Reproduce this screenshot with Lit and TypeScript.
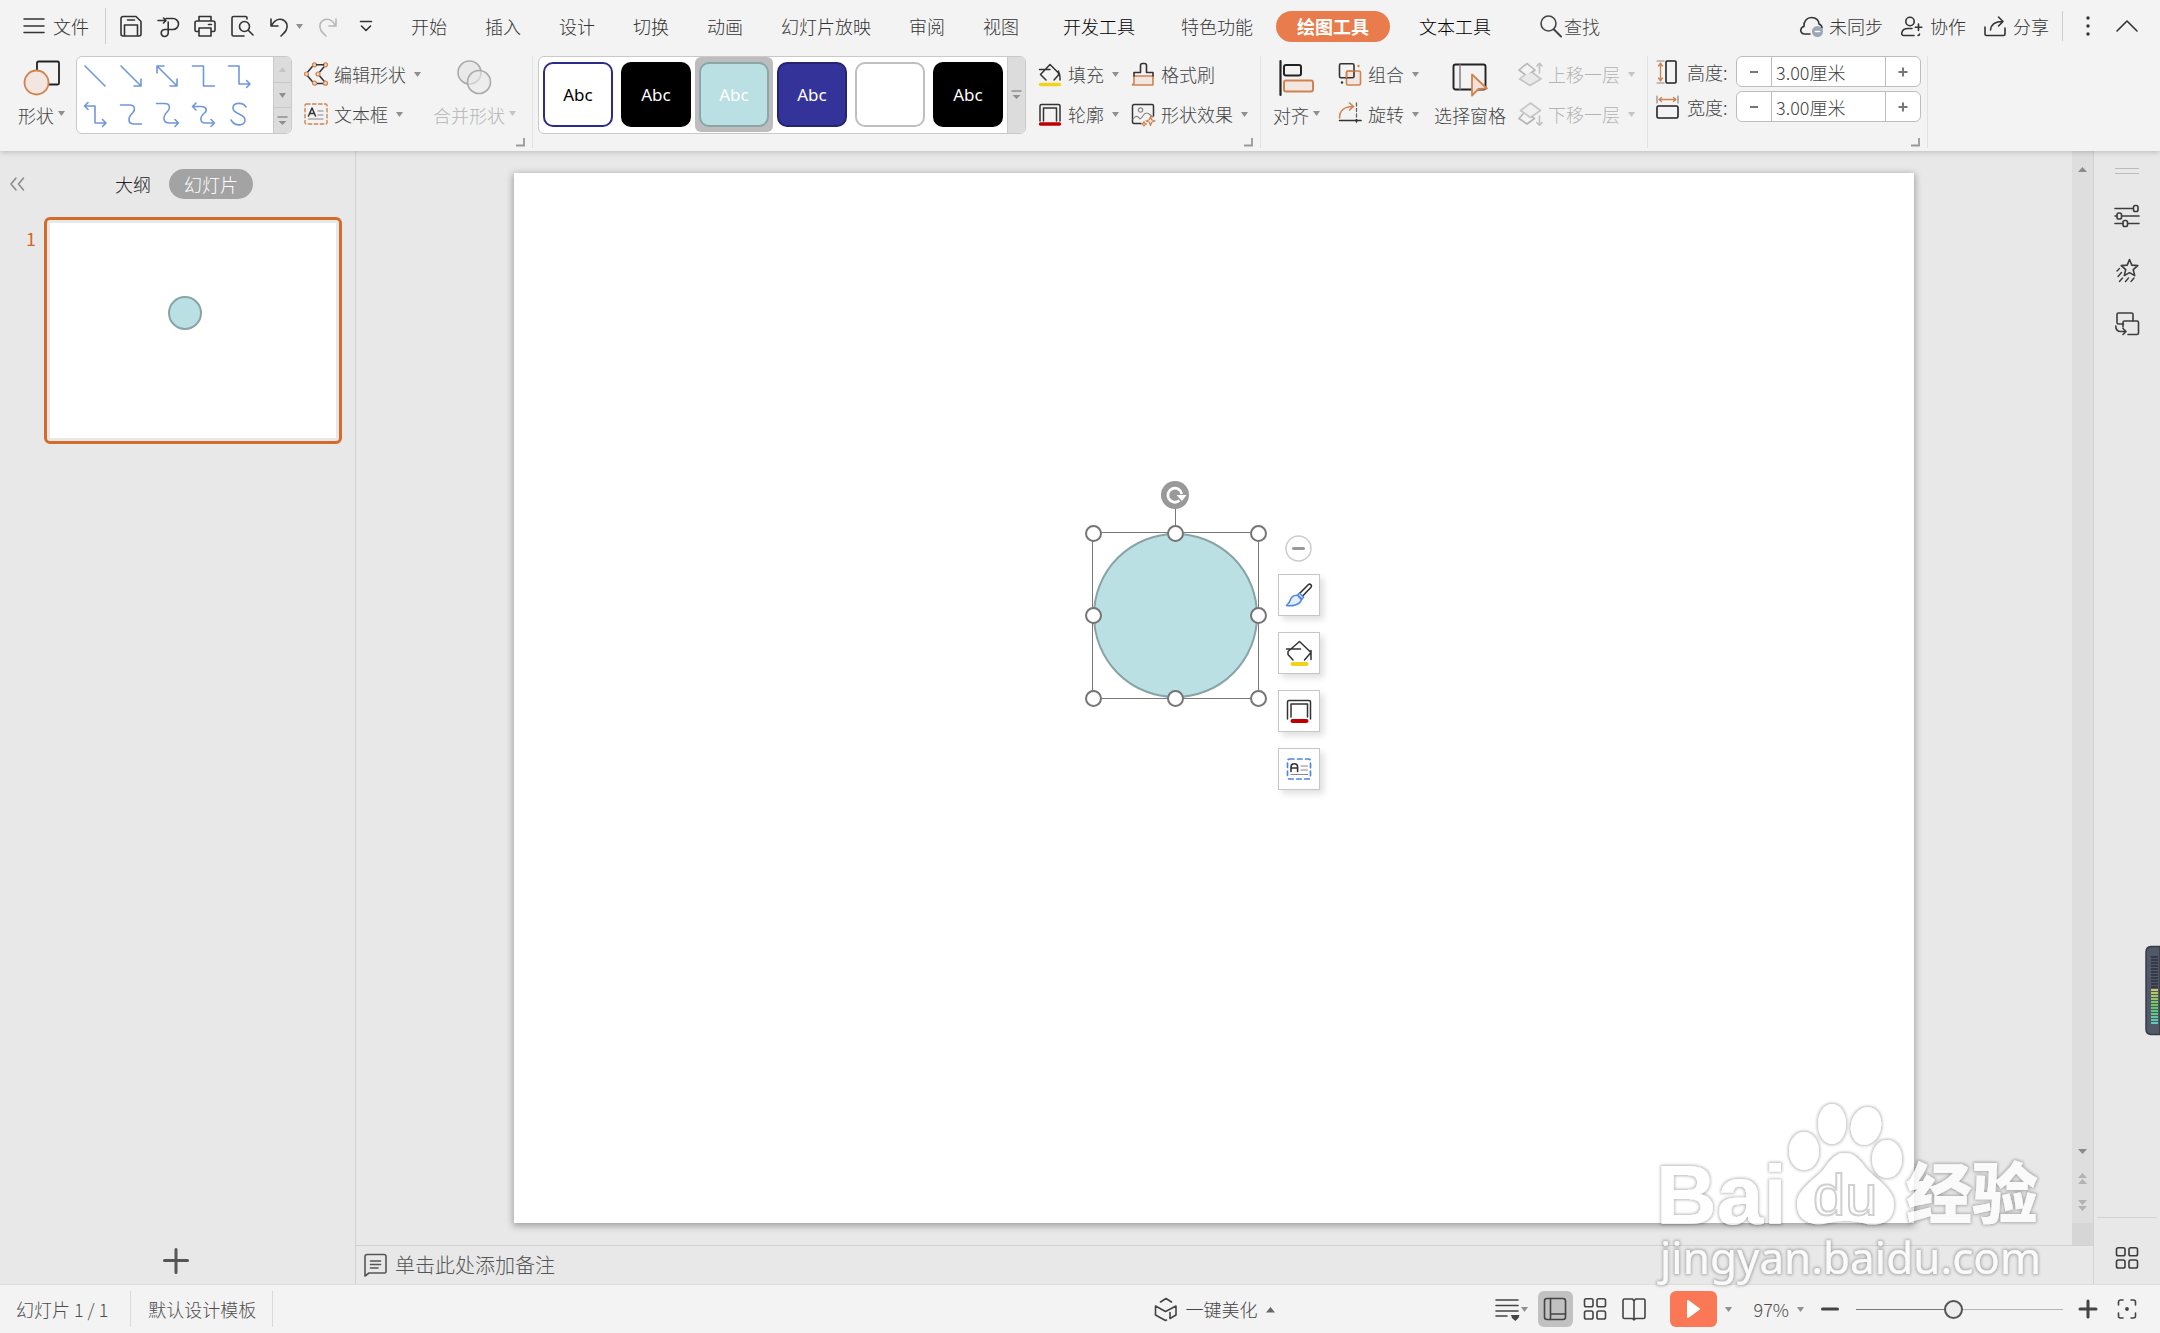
import { LitElement, html, svg, css, TemplateResult, SVGTemplateResult } from "lit";
import { customElement, state, property } from "lit/decorators.js";
import { classMap } from "lit/directives/class-map.js";
import { styleMap } from "lit/directives/style-map.js";

const icon = (body: SVGTemplateResult, w = 24, h = 24): TemplateResult => html`
  <svg class="ico" width=${w} height=${h} viewBox="0 0 ${w} ${h}" fill="none" stroke="currentColor"
    stroke-width="1.6" stroke-linecap="round" stroke-linejoin="round" aria-hidden="true">${body}</svg>`;

const caret = html`<svg class="caret" width="7" height="5" viewBox="0 0 7 5" aria-hidden="true"><path d="M0 0h7L3.5 5z" fill="currentColor"/></svg>`;

const O = "#cf8350";
const OF = "#f3e6e0";

const I = {
  menu: icon(svg`<path d="M1 5h20M1 12h20M1 18.500h20" stroke-width="1.500"/>`, 22, 24),
  save: icon(svg`<path d="M2 4.500a2 2 0 0 1 2-2h13l5 5V20a2 2 0 0 1-2 2H4a2 2 0 0 1-2-2zM5.500 22V11h13v11M8.500 6h7"/>`),
  exportDoc: icon(svg`<path d="M2 6.500h8M7.500 4l2.500 2.500L7.500 9M10 4.500h7a5.500 5.500 0 0 1 0 11H9a3.500 3.500 0 1 0 3.200 3.500V8"/>`),
  print: icon(svg`<path d="M6 7V2.500h12V7M5 17.500H3.500A1.500 1.500 0 0 1 2 16V9a2 2 0 0 1 2-2h16a2 2 0 0 1 2 2v7a1.500 1.500 0 0 1-1.500 1.500H19M6 14h12v8H6zM15.500 10.500h3"/>`),
  preview: icon(svg`<path d="M17 5V4a1.500 1.500 0 0 0-1.500-1.500h-12A1.500 1.500 0 0 0 2 4v16.500A1.500 1.500 0 0 0 3.500 22H14"/><circle cx="14.500" cy="12.500" r="5"/><path d="M18.500 16.500l4.500 4.500"/>`),
  undo: icon(svg`<path d="M4 5v7h7M4.500 11.500C7 7 11 4.500 15 5.500c5 1.500 6.500 7 4 11-1.200 2-3 3.500-5 5.500"/>`),
  redo: icon(svg`<path d="M20 5v7h-7M19.500 11.500C17 7 13 4.500 9 5.500c-5 1.500-6.500 7-4 11 1.200 2 3 3.500 5 5.500"/>`),
  more: icon(svg`<path d="M7.500 7.500h11M8.500 12l4.500 4.500 4.500-4.500"/>`),
  search: icon(svg`<circle cx="9.500" cy="9.500" r="7.500"/><path d="M15 15.500l7 7" stroke-width="2"/>`),
  cloud: icon(svg`<path d="M11 20H5.500C2 20 .8 16.500 2.500 14c.7-1 1.800-1.400 2.500-1.500C4.500 7 8 3.500 12.500 3.500c4.500 0 7.500 3 7.500 6.500 2 .8 3 2 3 4"/><circle cx="18.500" cy="17.500" r="5.500" fill="#9ba6b8" stroke="none"/><path d="M16.500 17.500h4" stroke="#fff"/>`),
  person: icon(svg`<circle cx="10" cy="7.500" r="4.200"/><path d="M14 21.500H3.500c-2 0-2-2-1.500-3.500.6-2 3-3.500 6-3.500h4M18 21.500c1 0 1.500-.5 1.500-1.500M18.500 10v6.500M15.300 13.200h6.500"/>`),
  share: icon(svg`<path d="M2 13v7a1.500 1.500 0 0 0 1.500 1.500h17A1.500 1.500 0 0 0 22 20v-6M7.500 16c.5-5 4-8.500 12-8.500M15.500 3l4.500 4.500-4.500 4.500"/>`),
  dots: icon(svg`<g fill="currentColor" stroke="none"><circle cx="6" cy="4" r="1.700"/><circle cx="6" cy="12" r="1.700"/><circle cx="6" cy="20" r="1.700"/></g>`, 12, 24),
  chevUp: icon(svg`<path d="M2 17L12 7l10 10"/>`),

  shapes: icon(svg`<rect x="13" y="1.500" width="22" height="23" rx="1.500" stroke="#222" stroke-width="1.800"/><circle cx="12.500" cy="22.500" r="12" fill="${OF}" stroke="${O}" stroke-width="1.800"/>`, 36, 36),
  editShape: icon(svg`<path d="M10 2.500L2 12l8 9.500h12L14 12l8-9.500" stroke="#333" stroke-width="1.500"/><g fill="#f3d5c4" stroke="${O}" stroke-width="1.200"><circle cx="10.500" cy="2.800" r="2"/><circle cx="21.500" cy="2.800" r="2"/><circle cx="2.500" cy="12" r="2"/><circle cx="14" cy="12" r="2"/><circle cx="10.500" cy="21.200" r="2"/><circle cx="21.500" cy="21.200" r="2"/></g><path d="M12.500 2.800h7" stroke="#333" stroke-width="1.500"/>`),
  textBox: icon(svg`<rect x="1" y="2" width="22" height="20" rx="1.500" stroke="${O}" stroke-width="1.400" stroke-dasharray="3.500 2.500"/><path d="M4.500 14L8 6l3.500 8M5.800 11.500h4.400" stroke="#333" stroke-width="1.500"/><path d="M14 9h5M14 13h5M4.500 17h14.500" stroke="#888" stroke-width="1.200"/>`),
  merge: icon(svg`<g stroke="#aaa" fill="#e9e9e9"><circle cx="12.500" cy="12.500" r="11.500"/><circle cx="22" cy="22" r="11.500" fill-opacity=".6"/></g>`, 35, 35),
  fill: icon(svg`<path d="M8 18L2.500 12.500 12 2.500l8.500 8.500M16 18l4.500-5V9M1.500 7.500h10.500M20.500 10c1.500 1 1.500 3 1.500 8" stroke="#333" stroke-width="1.500"/><path d="M2.500 22.500h19" stroke="#f2d31b" stroke-width="3.400"/>`),
  outline: icon(svg`<path d="M2 19V4a1.500 1.500 0 0 1 1.500-1.500h17A1.500 1.500 0 0 1 22 4v15M5.500 19V6h13v13" stroke="#333" stroke-width="1.500"/><path d="M2.500 22h19" stroke="#c00000" stroke-width="3.400"/>`),
  brush: icon(svg`<path d="M3 14h19v9H1.500L3 21z" fill="${OF}" stroke="${O}"/><path d="M3 14v-3.500h6.500V3.500a2 2 0 0 1 2-2h2a2 2 0 0 1 2 2v7H22V14" stroke="#333"/>`),
  effects: icon(svg`<path d="M10 21.500H3A1.500 1.500 0 0 1 1.500 20V4A1.500 1.500 0 0 1 3 2.500h18A1.500 1.500 0 0 1 22.500 4v10" stroke="#333" stroke-width="1.500"/><g stroke="#888" stroke-width="1.200"><circle cx="9.500" cy="8" r="2.200"/><path d="M2 17c3-4 5-3 7 0 3-1 3-6 6.500-6 3 0 4 2 6 4"/></g><path d="M19.500 14.500l1.200 3.300 3.300 1.200-3.300 1.200-1.200 3.300-1.200-3.300L15 19l3.300-1.200zM13 19.500l.8 1.700 1.700.8-1.700.8L13 24l-.8-1.200-1.700-.8 1.700-.8z" stroke="${O}" stroke-width="1.200" fill="${OF}"/>`),
  align: icon(svg`<path d="M1.500 1v34" stroke="#222" stroke-width="2.200"/><rect x="5" y="5" width="17" height="10.500" rx="2" stroke="#222" stroke-width="2"/><rect x="5" y="20.500" width="29" height="11" rx="2" stroke="${O}" stroke-width="2" fill="${OF}"/>`, 36, 36),
  group: icon(svg`<rect x="8.500" y="9" width="14" height="14" rx="1.500" fill="${OF}" stroke="${O}"/><rect x="1.500" y="1.800" width="14.500" height="14" rx="1.500" stroke="#333"/><path d="M8.500 15.500V10.500a1.500 1.500 0 0 1 1.500-1.500h6" stroke="${O}"/><circle cx="20.500" cy="4" r="1.200" fill="${O}" stroke="none"/><circle cx="4" cy="20.500" r="1.200" fill="#333" stroke="none"/>`),
  rotate: icon(svg`<path d="M1.500 16C1.500 8.500 7 4.500 15 4.500M11.500 1l4 3.500-4 3.500" stroke="${O}"/><path d="M18.500 1v22" stroke="#666" stroke-width="1.300" stroke-dasharray="3 2.500"/><path d="M1.500 18.500h21.500" stroke="#333"/><circle cx="18.500" cy="18.500" r="1.300" fill="#333" stroke="none"/>`),
  pane: icon(svg`<rect x="1.500" y="4.500" width="32" height="25" rx="2" stroke="#222" stroke-width="1.900"/><path d="M8 5v24" stroke="#888"/><path d="M20 14.500l15 14-8.500.5L20 35.500z" fill="#f3e2d8" stroke="${O}" stroke-width="1.800"/>`, 36, 36),
  up: icon(svg`<path d="M9 1.500L17 8l-8 6-8-6z"/><path d="M14.500 10.500l8.500 6.500-11 6.500L1.500 17l5-4" stroke-opacity=".7" fill="#e9e9e9"/><path d="M21.500 11V1.500M18.800 4l2.700-2.700L24 4" stroke-opacity=".8"/>`),
  down: icon(svg`<path d="M12.500 1l10 7.500-10 7-10-7z" stroke-opacity=".7" fill="#efefef"/><path d="M5 12l-4 4.500L9 22l7.500-5.500-2-1.500" /><path d="M21.500 14v9M18.800 20.500l2.700 2.700 2.500-2.700" stroke-opacity=".8"/>`),
  height: icon(svg`<path d="M1 1h7M1 23h7" stroke="#888" stroke-width="1.200"/><path d="M4.500 3v18M2.500 6l2-2.800 2 2.800M2.500 18l2 2.800 2-2.800" stroke="${O}" stroke-width="1.300"/><rect x="10" y="1" width="10" height="22" rx="1" stroke="#222"/>`),
  width: icon(svg`<path d="M1 1v7M22 1v7" stroke="#888" stroke-width="1.200"/><path d="M3 4.500h17M5.500 2.500L3 4.500l2.500 2M17.500 2.500l2.500 2-2.500 2" stroke="${O}" stroke-width="1.300"/><rect x="1" y="11" width="21" height="12" rx="1.500" stroke="#222"/>`),
  launcher: icon(svg`<path d="M8 0v7.500H0" stroke="#999" stroke-width="1.800" stroke-linecap="butt" stroke-linejoin="miter"/>`, 9, 9),

  collapse: icon(svg`<path d="M6 1L1 7l5 6M13.500 1l-5 6 5 6" stroke="#888" stroke-width="1.500"/>`, 15, 14),
  plus: icon(svg`<path d="M1.500 12.500h23M13 1.500v23" stroke-width="3"/>`, 26, 26),
  note: icon(svg`<path d="M2 23V3.500a2 2 0 0 1 2-2h17a2 2 0 0 1 2 2v15a1.500 1.500 0 0 1-1.500 1.500H6z"/><path d="M7.500 8h10M7.500 11.500h10M7.500 15h7.500"/>`),
  magic: icon(svg`<path d="M1.500 9v9l10 5.500 1-.5M1.500 9l10 5.500L22 9v9l-6 3.500v-6M6.500 5L12 1.500 17.500 5"/>`),
  lines: icon(svg`<path d="M1 3h22M1 8.500h22M1 14h22M1 19h11"/><path d="M16 18h8.500l-1 3-3.200 3-3.300-3z" fill="currentColor" stroke="none"/>`),
  normal: icon(svg`<rect x="1.500" y="1.500" width="21" height="21" rx="2.500"/><path d="M7.500 1.500v21M7.500 17h15"/>`),
  grid: icon(svg`<rect x="1.500" y="1.800" width="8.500" height="8" rx="1.800"/><rect x="14" y="1.800" width="8.500" height="8" rx="1.800"/><rect x="1.500" y="14" width="8.500" height="8" rx="1.800"/><rect x="14" y="14" width="8.500" height="8" rx="1.800"/>`),
  book: icon(svg`<path d="M12 4l-1.500-2H2.500a1.500 1.500 0 0 0-1.500 1.500V20a1.500 1.500 0 0 0 1.500 1.500h8L12 23l1.500-1.500h8A1.500 1.500 0 0 0 23 20V3.500A1.500 1.500 0 0 0 21.500 2h-8zM12 4v19"/>`),
  play: icon(svg`<path d="M5 5v16L16 13z" fill="#fff" stroke="#fff" stroke-width="2"/>`, 20, 26),
  minus: icon(svg`<path d="M4.500 12h15" stroke-width="3"/>`),
  plusSm: icon(svg`<path d="M4 12h16M12 4v16" stroke-width="3"/>`),
  fit: icon(svg`<path d="M3.500 8V5a2 2 0 0 1 2-2h2.500M16 3h2.500a2 2 0 0 1 2 2v3M20.500 16v3a2 2 0 0 1-2 2H16M8 21H5.500a2 2 0 0 1-2-2v-3"/><circle cx="12" cy="12" r="1.900" fill="currentColor" stroke="none"/>`),

  sliders: icon(svg`<path d="M0 4.500h18M0 12h2M7 12h17M0 19.500h8M13 19.500h11"/><rect x="18.500" y="1.500" width="4.500" height="6" rx="1.800"/><rect x="2" y="9" width="4.500" height="6" rx="1.800"/><rect x="8" y="16.500" width="4.500" height="6" rx="1.800"/>`),
  star: icon(svg`<path d="M14.500 1.500l2.300 5.600 6 .5-4.600 4 1.500 6-5.200-3-5.200 3 1.400-6-4.500-4 6-.5z"/><path d="M4.500 10.500L2 13M6.500 14.500l-3.500 4M7.500 20l-3 3.500M13.500 20l-3 3.500M19 20l-3 3.500" stroke-width="1.400"/>`),
  swap: icon(svg`<path d="M8.500 12H3.500A1.500 1.500 0 0 1 2 10.500v-8A1.500 1.500 0 0 1 3.500 1h13A1.500 1.500 0 0 1 18 2.500V9"/><path d="M13 22.500h9a1.500 1.500 0 0 0 1.500-1.500v-10.500A1.500 1.500 0 0 0 22 9H9.500A1.500 1.500 0 0 0 8 10.500V15"/><path d="M.8 14c0 4 2 5.500 5 5.500h5M8 16.500l3 3-3 3"/>`),

  quickBrush: icon(svg`<path d="M14.500 11.500L23.500 2.500c1.500-1.200 4 .8 2.500 2.800l-9 9.500" stroke="#333"/><path d="M12.500 13l4.500 4M14.500 11l4 4.200-2 2.500-4-4.500zM12.500 13.200c-5-.3-7 3.500-7.500 5.500-.5 2-2 3.300-3.500 4.800 5 .8 13.500-.3 15-6z" stroke="#4f86e0" stroke-width="1.500" fill="#e3ecfa"/>`, 28, 26),
  quickFill: icon(svg`<path d="M8 20l-5-5.500v-3L14.500 1.500 26 12.500 19.500 20M1.500 9h14M26 10.500v9" stroke="#333" stroke-width="1.500"/><path d="M7.500 24h14" stroke="#f2d31b" stroke-width="4"/>`, 28, 26),
  quickOutline: icon(svg`<path d="M2.500 21V4A1.500 1.500 0 0 1 4 2.500h20A1.500 1.500 0 0 1 25.500 4v17M6 19V6h16.500v13" stroke="#333" stroke-width="1.500"/><path d="M7.500 23h14" stroke="#c00000" stroke-width="4"/>`, 28, 26),
  quickText: icon(svg`<rect x="2.500" y="3" width="23" height="20" rx="2" stroke="#4f86e0" stroke-width="1.700" stroke-dasharray="4.500 3.500"/><path d="M6 15.500V11a3.300 3.300 0 0 1 6.600 0v4.500M6 12h6.600" stroke="#333"/><path d="M16 10h6.500M16 14h6.500M6 18.500h16.500" stroke="#888" stroke-width="1.200"/>`, 28, 26),
  rotateHandle: icon(svg`<circle cx="14" cy="14" r="14" fill="#999" stroke="none"/><path d="M18.500 19.500A7 7 0 1 1 20.800 13" stroke="#fff" stroke-width="2.800" stroke-linecap="butt"/><path d="M15.500 14h10l-4.500 6z" fill="#fff" stroke="none"/>`, 28, 28),
  minusRound: icon(svg`<circle cx="13.500" cy="13.500" r="12.500" fill="#fff" stroke="#ccc" stroke-width="1.500"/><path d="M8.500 13.500h10" stroke="#999" stroke-width="3"/>`, 27, 27),
};

const CONNECTORS: [string, SVGTemplateResult][] = [
  ["直线", svg`<path d="M2 2l20 20"/>`],
  ["箭头", svg`<path d="M2 2l20 20M22 15v7h-7"/>`],
  ["双箭头", svg`<path d="M2 2l20 20M22 15v7h-7M2 9V2h7"/>`],
  ["肘形连接符", svg`<path d="M1.500 2h11v20h11"/>`],
  ["肘形箭头连接符", svg`<path d="M1.500 2h10.500v18h11M19.500 16.500L23 20l-3.500 3.500"/>`],
  ["肘形双箭头连接符", svg`<path d="M1.500 4h10.500v17h11M19.500 17.500L23 21l-3.500 3.500M5 .5L1.500 4 5 7.500"/>`],
  ["曲线连接符", svg`<path d="M1.500 3h9c6 0 6 5 3 8-5 5-5 11 2 11h7"/>`],
  ["曲线箭头连接符", svg`<path d="M1.500 1.500h8c6 0 6 5 3 8-5 5-5 11.500 2 11.500h9M20 17.500l3.500 3.500-3.500 3.500"/>`],
  ["曲线双箭头连接符", svg`<path d="M1.500 4.500h9c5 0 6 4 3 6.500-5 4-5 10 1 10h9M20 17.500l3.500 3.500-3.500 3.500M5 1L1.500 4.500 5 8"/>`],
  ["曲线", svg`<path d="M19 5c-3-5-13-5-13 1 0 7 12 5 12 12 0 6-10 7-14 0"/>`],
];

const PRESETS = ["outlined", "black", "teal", "navy", "blank", "black"];

const TABS: { name: string; kind?: string }[] = [
  { name: "开始" }, { name: "插入" }, { name: "设计" }, { name: "切换" }, { name: "动画" },
  { name: "幻灯片放映" }, { name: "审阅" }, { name: "视图" },
  { name: "开发工具", kind: "strong" }, { name: "特色功能", kind: "wide" },
  { name: "绘图工具", kind: "ctx" }, { name: "文本工具", kind: "strong after" },
];

// Shape geometry in percent of the slide.
const SHAPE = { left: "41.3%", top: "34.2%", width: "11.9%" };

const shared = css`
  :host { display: block; }
  * { box-sizing: border-box; }
  button, input { font: inherit; color: inherit; background: none; border: 0; padding: 0; margin: 0; }
  button { cursor: pointer; display: flex; align-items: center; justify-content: center; white-space: nowrap; }
  svg { display: block; flex: none; overflow: visible; }
  .caret { color: #8f8f8f; }
`;

@customElement("title-bar")
export class TitleBar extends LitElement {
  @state() active = "绘图工具";

  static styles = [shared, css`
    header { display: flex; align-items: center; height: 52px; padding: 0 21px 0 23px; color: #333; }
    .file { gap: 8px; }
    .rule { width: 1px; height: 36px; background: #ccc; margin: 0 13px 0 16px; }
    .quick { display: flex; align-items: center; gap: 13px; margin-right: 15px; }
    .pair { display: flex; align-items: center; gap: 5px; }
    .off { color: #b8b8b8; }
    nav { display: flex; align-items: center; }
    .tab { height: 31px; padding: 0 19px; }
    .strong { color: #000; padding: 0 23px 0 25px; }
    .wide { padding: 0 23px; }
    .ctx { border-radius: 16px; background: #e87c4c; color: #fff; font-weight: 700; padding: 0 21px; }
    .after { padding: 0 24px 0 29px; }
    .search { margin-left: 24px; gap: 1px; color: #444; }
    .account { display: flex; align-items: center; margin-left: auto; gap: 17px; }
    .account button { gap: 6px; }
    .account .rule { margin: 0 2px 0 -4px; height: 30px; }
    .account .options { margin-right: 4px; }
  `];

  render() {
    return html`<header>
      <button class="file">${I.menu}<span>文件</span></button>
      <span class="rule"></span>
      <div class="quick">
        <button aria-label="保存">${I.save}</button>
        <button aria-label="输出">${I.exportDoc}</button>
        <button aria-label="打印">${I.print}</button>
        <button aria-label="打印预览">${I.preview}</button>
        <button class="pair" aria-label="撤销">${I.undo}${caret}</button>
        <button class="off" aria-label="恢复">${I.redo}</button>
        <button aria-label="更多">${I.more}</button>
      </div>
      <nav>${TABS.map(t => html`<button class="tab ${t.kind ?? ""}" @click=${() => (this.active = t.name)}>${t.name}</button>`)}</nav>
      <button class="search">${I.search}<span>查找</span></button>
      <div class="account">
        <button>${I.cloud}<span>未同步</span></button>
        <button>${I.person}<span>协作</span></button>
        <button>${I.share}<span>分享</span></button>
        <span class="rule"></span>
        <button class="options" aria-label="更多选项">${I.dots}</button>
        <button aria-label="收起功能区">${I.chevUp}</button>
      </div>
    </header>`;
  }
}

@customElement("ribbon-bar")
export class RibbonBar extends LitElement {
  @state() preset = 2;

  static styles = [shared, css`
    .bar { display: flex; height: 99px; padding: 4px 0 3px; color: #444; }
    .group { position: relative; display: flex; border-right: 1px solid #e2e2e2; height: 92px; }
    .g1 { padding: 0 16px 0 18px; }
    .g2 { padding: 0 12px 0 5px; }
    .g3 { padding: 0 12px; }
    .g4 { padding: 0 6px 0 8px; }
    .launcher { position: absolute; right: 7px; bottom: 1px; }
    .big { flex-direction: column; justify-content: flex-start; height: 71px; padding-top: 4px; }
    .label { display: flex; align-items: flex-start; gap: 4px; margin-top: auto; line-height: 24px; }
    .label .caret { margin-top: 8px; }
    .gallery { display: flex; height: 78px; background: #fff; border: 1px solid #c9c9c9; border-radius: 6px; overflow: hidden; }
    .g1 .gallery { margin: 0 12px 0 11px; }
    .lines { display: grid; grid-template-columns: repeat(5, 24px); gap: 12px; padding: 6px 22px 6px 6px; color: #6f97dc; }
    .scroll { display: flex; flex-direction: column; width: 18px; background: #dcdcdc; border-left: 1px solid #c9c9c9; }
    .scroll button { flex: 1; color: #8f8f8f; }
    .scroll button + button { border-top: 1px solid #c9c9c9; }
    .scroll .dim { color: #c4c4c4; }
    .presets { display: flex; }
    .cell { width: 78px; height: 75px; border-radius: 6px; }
    .cell.on { background: #bdbdbd; }
    .chip { display: grid; place-items: center; width: 70px; height: 65px; border-radius: 10px; border: 2px solid #000; font: 17px "Noto Sans", sans-serif; color: #fff; }
    .outlined { border-color: #2b2b8c; color: #000; background: #fff; }
    .black { background: #000; }
    .teal { background: #bae0e3; border-color: #8aa6a9; }
    .navy { background: #333399; border-color: #25256f; }
    .blank { background: #fff; border-color: #bfbfbf; }
    .col { display: flex; flex-direction: column; gap: 16px; padding-top: 6px; align-items: flex-start; }
    .item { gap: 6px; height: 24px; }
    .item .caret { margin-left: 2px; }
    .g2 .col { margin-left: 12px; }
    .off { color: #b4b4b4; }
    .off .caret { color: #c4c4c4; }
    .m12 { margin-left: 12px; }
    .m15 { margin-left: 15px; }
    .m18 { margin-left: 18px; }
    .sizes { display: flex; flex-direction: column; gap: 4px; }
    .size { display: flex; align-items: center; gap: 7px; height: 31px; }
    .size label { width: 42px; }
    .stepper { display: flex; width: 185px; height: 31px; border: 1px solid #bdbdbd; border-radius: 6px; background: #fff; overflow: hidden; }
    .stepper button { width: 34px; }
    .stepper input { flex: 1; min-width: 0; padding: 0 0 0 4px; border: solid #bdbdbd; border-width: 0 1px; outline: 0; }
  `];

  item(ic: TemplateResult, text: string, drop = true, off = false) {
    return html`<button class=${classMap({ item: true, off })}>${ic}<span>${text}</span>${drop ? caret : ""}</button>`;
  }

  big(ic: TemplateResult, text: string, drop = true, cls = "") {
    return html`<button class="big ${cls}">${ic}<span class="label">${text}${drop ? caret : ""}</span></button>`;
  }

  launcher(name: string) {
    return html`<button class="launcher" aria-label=${name}>${I.launcher}</button>`;
  }

  size(id: string, text: string, ic: TemplateResult) {
    const step = (d: string) => html`<button aria-label=${text + d}>${icon(svg`<path d=${d === "+" ? "M1.500 6h9M6 1.500v9" : "M2 6h8"} stroke="#777" stroke-width="2" stroke-linecap="butt"/>`, 12, 12)}</button>`;
    return html`<div class="size">${ic}<label for=${id}>${text}:</label>
      <div class="stepper">${step("-")}<input id=${id} type="text" .value=${"3.00厘米"} />${step("+")}</div></div>`;
  }

  render() {
    const moreGlyph = icon(svg`<path d="M0 1h9" stroke-width="1.400"/><path d="M0.500 5h8L4.500 9z" fill="currentColor" stroke="none"/>`, 9, 10);
    return html`<div class="bar">
      <section class="group g1">
        ${this.big(I.shapes, "形状")}
        <div class="gallery">
          <div class="lines">${CONNECTORS.map(([n, p]) => html`<button aria-label=${n}>${icon(p)}</button>`)}</div>
          <div class="scroll">
            <button class="dim" aria-label="上一行">${icon(svg`<path d="M0 5L3.500 0 7 5z" fill="currentColor" stroke="none"/>`, 7, 5)}</button>
            <button aria-label="下一行">${caret}</button>
            <button aria-label="全部形状">${moreGlyph}</button>
          </div>
        </div>
        <div class="col">${this.item(I.editShape, "编辑形状")}${this.item(I.textBox, "文本框")}</div>
        ${this.big(I.merge, "合并形状", true, "m12 off")}
        ${this.launcher("形状设置")}
      </section>
      <section class="group g2">
        <div class="gallery">
          <div class="presets">${PRESETS.map((p, i) => html`
            <button class=${classMap({ cell: true, on: i === this.preset })} aria-label="样式 ${i + 1}" @click=${() => (this.preset = i)}>
              <span class="chip ${p}">${p === "blank" ? "" : "Abc"}</span></button>`)}</div>
          <div class="scroll"><button aria-label="更多样式">${moreGlyph}</button></div>
        </div>
        <div class="col">${this.item(I.fill, "填充")}${this.item(I.outline, "轮廓")}</div>
        <div class="col">${this.item(I.brush, "格式刷", false)}${this.item(I.effects, "形状效果")}</div>
        ${this.launcher("样式设置")}
      </section>
      <section class="group g3">
        ${this.big(I.align, "对齐")}
        <div class="col m18">${this.item(I.group, "组合")}${this.item(I.rotate, "旋转")}</div>
        ${this.big(I.pane, "选择窗格", false, "m15")}
        <div class="col m12">${this.item(I.up, "上移一层", true, true)}${this.item(I.down, "下移一层", true, true)}</div>
      </section>
      <section class="group g4">
        <div class="sizes">${this.size("h", "高度", I.height)}${this.size("w", "宽度", I.width)}</div>
        ${this.launcher("大小设置")}
      </section>
    </div>`;
  }
}

@customElement("slide-panel")
export class SlidePanel extends LitElement {
  static styles = [shared, css`
    :host { display: flex; flex-direction: column; border-right: 1px solid #d2d2d2; padding-top: 18px; color: #222; }
    .head { display: flex; align-items: center; height: 30px; padding-left: 10px; }
    .outline { margin: 0 18px 0 90px; }
    .slides { height: 30px; padding: 0 15px; border-radius: 15px; background: #a3a3a3; color: #fff; }
    .list { list-style: none; margin: 18px 0 0; padding: 0 13px 0 0; }
    .entry { display: flex; }
    .num { width: 44px; padding: 8px 8px 0 0; text-align: right; line-height: 26px; font-weight: 400; color: #d9621e; }
    .frame { flex: 1; border: 3px solid #d56b2b; border-radius: 6px; padding: 3px; }
    .thumb { display: block; position: relative; width: 100%; aspect-ratio: 4 / 3; background: #fff; }
    .dot { position: absolute; aspect-ratio: 1; border-radius: 50%; background: #bae0e3; border: 2px solid #8aa3a6; }
    .add { align-self: center; margin: auto 3px 10px 0; color: #555; }
  `];
  render() {
    return html`
      <div class="head">
        <button aria-label="折叠窗格">${I.collapse}</button>
        <button class="outline">大纲</button>
        <button class="slides">幻灯片</button>
      </div>
      <ol class="list"><li class="entry"><span class="num">1</span>
        <button class="frame" aria-label="幻灯片 1"><span class="thumb"><span class="dot" style=${styleMap(SHAPE)}></span></span></button></li></ol>
      <button class="add" aria-label="新建幻灯片">${I.plus}</button>`;
  }
}

@customElement("slide-canvas")
export class SlideCanvas extends LitElement {
  static styles = [shared, css`
    :host { display: flex; justify-content: center; padding: 22px 0; min-height: 0; min-width: 0; overflow: hidden; }
    .slide { position: relative; height: 100%; aspect-ratio: 4 / 3; background: #fff; box-shadow: 0 2px 7px 1px rgba(0,0,0,.32); }
    .shape { position: absolute; aspect-ratio: 1; border: 1px solid #777; }
    .fill { width: 100%; height: 100%; border-radius: 50%; background: #bae0e3; border: 2px solid #8aa3a6; }
    .stem { position: absolute; left: 50%; top: -26px; height: 26px; width: 1px; background: #777; }
    .spin { position: absolute; left: calc(50% - 14px); top: -52px; }
    .knob { position: absolute; width: 17px; height: 17px; margin: -8px; border-radius: 50%; background: #fff; border: 2px solid #757575; }
    .tools { position: absolute; left: calc(100% + 20px); top: 2px; display: flex; flex-direction: column; align-items: center; gap: 16px; }
    .tool { width: 42px; height: 42px; background: #fff; border: 1px solid #c6c6c6; box-shadow: 4px 4px 6px rgba(0,0,0,.12); }
    .tools .fold { margin-bottom: -4px; }
  `];
  render() {
    const stops = ["0%", "50%", "100%"];
    return html`<div class="slide">
      <div class="shape" style=${styleMap(SHAPE)}>
        <div class="fill"></div>
        <span class="stem"></span>
        <button class="spin" aria-label="旋转形状">${I.rotateHandle}</button>
        ${stops.flatMap(y => stops.filter(x => !(x === "50%" && y === "50%")).map(x => html`<span class="knob" style=${styleMap({ left: x, top: y })}></span>`))}
        <div class="tools">
          <button class="fold" aria-label="收起">${I.minusRound}</button>
          <button class="tool" aria-label="样式">${I.quickBrush}</button>
          <button class="tool" aria-label="填充">${I.quickFill}</button>
          <button class="tool" aria-label="轮廓">${I.quickOutline}</button>
          <button class="tool" aria-label="文字">${I.quickText}</button>
        </div>
      </div>
    </div>`;
  }
}

@customElement("status-bar")
export class StatusBar extends LitElement {
  @property({ type: Number }) zoom = 47;
  static styles = [shared, css`
    footer { display: flex; align-items: center; height: 49px; padding: 0 21px 0 16px; border-top: 1px solid #dedede; background: #f3f3f3; color: #444; }
    .info { color: #4c4c4c; white-space: pre; }
    .template { margin-left: 17px; }
    .template, .info { display: flex; align-items: center; height: 36px; border-right: 1px solid #d9d9d9; }
    .pages { padding-right: 22px; }
    .template { padding-right: 16px; }
    .gapA { flex: 4; }
    .gapB { flex: 1; }
    .beauty { gap: 8px; }
    .modes { display: flex; align-items: center; }
    .notes { gap: 2px; }
    .on { width: 35px; height: 36px; background: #c1c1c1; border-radius: 6px; margin: 0 10px; }
    .book { margin: 0 24px 0 15px; }
    .play { width: 47px; height: 36px; border-radius: 6px; background: #fb7857; margin-right: 8px; }
    .pct { gap: 8px; margin: 0 14px 0 22px; color: #4c4c4c; }
    .range { -webkit-appearance: none; appearance: none; width: 207px; height: 20px; margin: 0 13px 0 14px;
      background: linear-gradient(90deg, #777 47%, #b5b5b5 47%) center / 100% 1px no-repeat; }
    .range::-webkit-slider-thumb { -webkit-appearance: none; width: 19px; height: 19px; border-radius: 50%; border: 2px solid #555; background: #ededed; }
    .fit { margin-left: 15px; }
  `];
  render() {
    return html`<footer>
      <span class="info pages">幻灯片 1 / 1</span><span class="info template">默认设计模板</span>
      <span class="gapA"></span>
      <button class="beauty">${I.magic}<span>一键美化</span>${icon(svg`<path d="M0 6.500L4.500 1 9 6.500z" fill="#666" stroke="none"/>`, 9, 7)}</button>
      <span class="gapB"></span>
      <div class="modes">
        <button class="notes" aria-label="备注">${I.lines}${caret}</button>
        <button class="on" aria-label="普通视图">${I.normal}</button>
        <button aria-label="幻灯片浏览">${I.grid}</button>
        <button class="book" aria-label="阅读视图">${I.book}</button>
        <button class="play" aria-label="播放">${I.play}</button>
        <button aria-label="播放选项">${caret}</button>
        <button class="pct"><span>97%</span>${caret}</button>
        <button aria-label="缩小">${I.minus}</button>
        <input class="range" type="range" aria-label="缩放" min="0" max="100" .value=${String(this.zoom)} />
        <button aria-label="放大">${I.plusSm}</button>
        <button class="fit" aria-label="适应窗口">${I.fit}</button>
      </div>
    </footer>`;
  }
}

@customElement("app-root")
export class AppRoot extends LitElement {
  static styles = [shared, css`
    :host { position: relative; display: flex; flex-direction: column; height: 100vh; overflow: hidden; background: #e8e8e8;
      font: 300 18px/24px "Noto Sans CJK SC", "Noto Sans", sans-serif; }
    .top { background: #f3f3f3; box-shadow: 0 1px 6px rgba(0,0,0,.2); z-index: 1; }
    .middle { flex: 1; min-height: 0; display: grid; grid-template-columns: 356px minmax(0, 1fr) 67px; }
    .editor { display: grid; grid-template: minmax(0, 1fr) 39px / minmax(0, 1fr) 21px; min-height: 0; }
    .vscroll { display: flex; flex-direction: column; align-items: center; background: linear-gradient(#dedede calc(100% - 22px), #d6d6d6 0); padding: 16px 0 34px; color: #8a8a8a; }
    .vscroll .down { margin-top: auto; }
    .vscroll .page { color: #b3b3b3; margin-top: 16px; }
    .vscroll .prev { margin-top: 19px; }
    .memo { grid-column: 1 / -1; display: flex; align-items: center; gap: 8px; padding-left: 7px; border-top: 1px solid #d2d2d2; color: #555; }
    .memo input { flex: 1; font-size: 20px; outline: 0; }
    .memo input::placeholder { color: #555; opacity: 1; }
    .rail { display: flex; flex-direction: column; align-items: center; gap: 30px; border-left: 1px solid #d2d2d2; padding: 17px 0 14px; color: #3c3c3c; }
    .grip { width: 24px; height: 6px; border: solid #bbb; border-width: 1px 0; }
    .apps { align-self: stretch; margin: auto 3px 0; padding-top: 28px; border-top: 1px solid #d2d2d2; }
    .meter { position: absolute; right: 0; top: 71%; z-index: 2; }
    .mark { position: absolute; right: 100px; bottom: 42px; z-index: 2; pointer-events: none; }
    .latin { font: 700 84px "Liberation Sans", sans-serif; }
    .han { font: 900 66px "Noto Sans CJK SC", sans-serif; }
    .pad { font: 400 58px "Liberation Sans", sans-serif; }
    .url { font: 400 44px "Noto Sans", sans-serif; }
  `];

  meter() {
    const seg = (n: number, y: number, f: (i: number) => string) => Array.from({ length: n }, (_, i) => svg`<rect x="6" y=${y + i * 3} width="7" height="2" fill=${f(i)}/>`);
    return html`<svg class="meter" width="15" height="89" viewBox="0 0 15 89" aria-hidden="true">
      <path d="M15 .5H6Q1 1 1 6v77q0 5 5 5.500h9z" fill="#515868" stroke="#373b46" stroke-width="1.500"/>
      ${seg(11, 10, () => "#363a46")}${seg(12, 43, i => `hsl(${62 + i * 10} 50% 58%)`)}</svg>`;
  }

  watermark() {
    return html`<svg class="mark" width="410" height="200" viewBox="1650 1090 410 200" role="img" aria-label="Baidu 经验">
      <defs><filter id="halo" x="-5%" y="-5%" width="110%" height="110%"><feMorphology in="SourceAlpha" operator="dilate" radius="1" result="d"/><feGaussianBlur in="d" stdDeviation="1.500" result="b"/><feFlood flood-color="#000" flood-opacity=".34"/><feComposite in2="b" operator="in" result="s"/><feMerge><feMergeNode in="s"/><feMergeNode in="SourceGraphic"/></feMerge></filter></defs>
      <g fill="#fff" filter="url(#halo)" opacity=".8">
        <text class="latin" x="1656" y="1223">Bai</text>
        <ellipse cx="1804" cy="1150" rx="15" ry="19"/><ellipse cx="1832" cy="1123" rx="14" ry="20"/>
        <ellipse cx="1866" cy="1125" rx="15" ry="19" transform="rotate(14 1866 1125)"/><ellipse cx="1887" cy="1158" rx="15" ry="19"/>
        <path d="M1845 1152c9 0 14 6 20 14 7 10 29 21 29 37 0 20-18 23-31 19-12-3-22-3-35 0-14 4-31-1-31-19 0-15 19-25 27-35 7-10 12-16 21-16z"/>
        <text class="han" x="1906" y="1217">经验</text>
        <text class="url" x="1660" y="1273">jingyan.baidu.com</text>
      </g>
      <text class="pad" x="1813" y="1214" fill="#fff" stroke="#d0d0d0" stroke-width="2">du</text>
    </svg>`;
  }

  render() {
    const twin = (flip: boolean) => icon(svg`<path d=${flip ? "M0 0h9L4.500 5zM0 6h9L4.500 11z" : "M0 5h9L4.500 0zM0 11h9L4.500 6z"} fill="currentColor" stroke="none"/>`, 9, 11);
    return html`
      <div class="top"><title-bar></title-bar><ribbon-bar></ribbon-bar></div>
      <div class="middle">
        <slide-panel></slide-panel>
        <div class="editor">
          <slide-canvas></slide-canvas>
          <div class="vscroll">
            <button aria-label="向上滚动">${icon(svg`<path d="M0 5L4.500 0 9 5z" fill="currentColor" stroke="none"/>`, 9, 5)}</button>
            <button class="down" aria-label="向下滚动">${icon(svg`<path d="M0 0h9L4.500 5z" fill="currentColor" stroke="none"/>`, 9, 5)}</button>
            <button class="page prev" aria-label="上一张">${twin(false)}</button>
            <button class="page" aria-label="下一张">${twin(true)}</button>
          </div>
          <label class="memo">${I.note}<input type="text" aria-label="备注" placeholder="单击此处添加备注" /></label>
        </div>
        <aside class="rail">
          <span class="grip"></span>
          <button aria-label="对象属性">${I.sliders}</button>
          <button aria-label="动画窗格">${I.star}</button>
          <button aria-label="切换窗格">${I.swap}</button>
          <button class="apps" aria-label="应用">${I.grid}</button>
        </aside>
      </div>
      <status-bar></status-bar>
      ${this.meter()}${this.watermark()}`;
  }
}
